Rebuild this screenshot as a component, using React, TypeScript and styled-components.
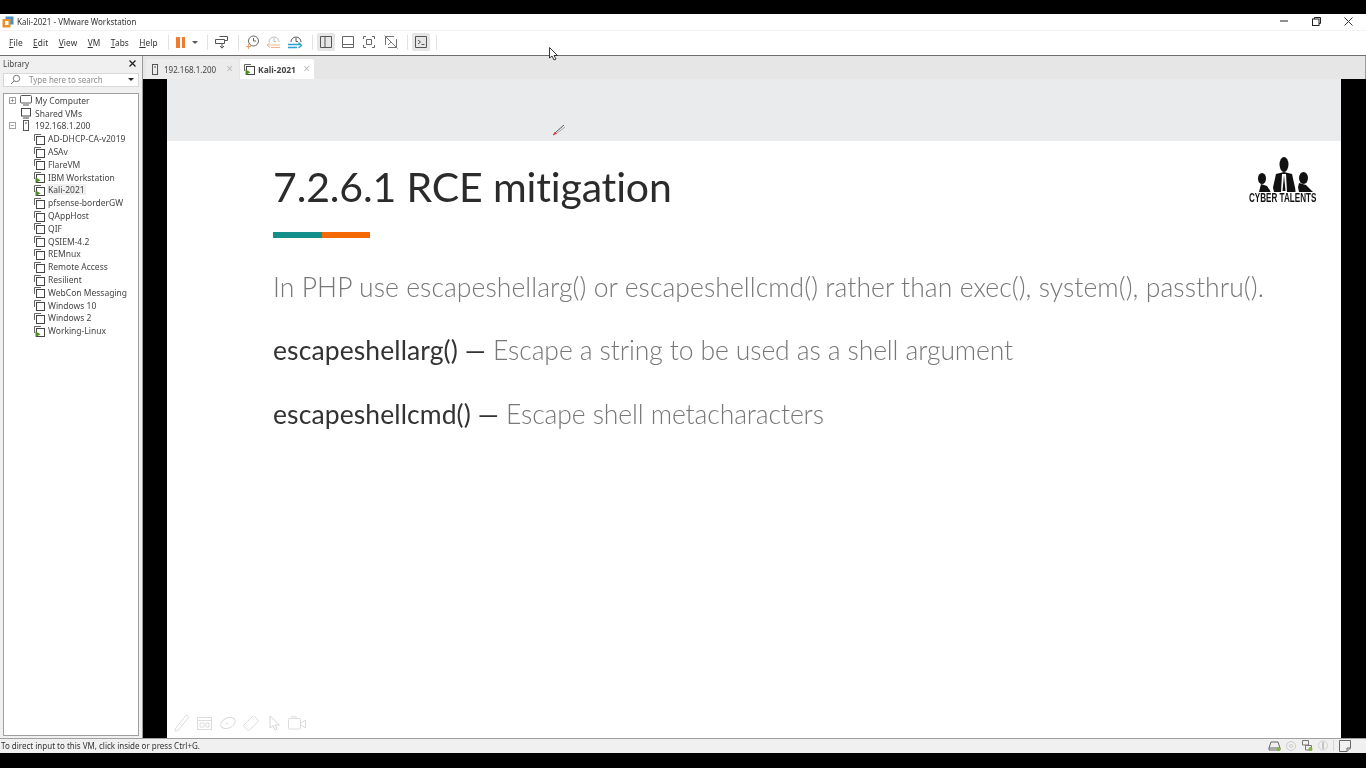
import styled, { createGlobalStyle } from 'styled-components';

const GlobalStyle = createGlobalStyle`
	html, body {
		margin: 0;
		padding: 0;
		background: #000;
		overflow: hidden;
	}
	* {
		box-sizing: border-box;
	}
`;

const uiFont = `"Noto Sans", "Open Sans", "Liberation Sans", sans-serif`;
const slideFont = `Lato, "Noto Sans", sans-serif`;

type TreeItem = { name: string; running?: boolean; selected?: boolean };

const vms: TreeItem[] = [
	{ name: 'AD-DHCP-CA-v2019' },
	{ name: 'ASAv' },
	{ name: 'FlareVM' },
	{ name: 'IBM Workstation', running: true },
	{ name: 'Kali-2021', running: true, selected: true },
	{ name: 'pfsense-borderGW' },
	{ name: 'QAppHost' },
	{ name: 'QIF' },
	{ name: 'QSIEM-4.2' },
	{ name: 'REMnux' },
	{ name: 'Remote Access' },
	{ name: 'Resilient' },
	{ name: 'WebCon Messaging' },
	{ name: 'Windows 10' },
	{ name: 'Windows 2' },
	{ name: 'Working-Linux', running: true },
];

const menus = ['File', 'Edit', 'View', 'VM', 'Tabs', 'Help'];

const VmIcon = ({ running }: { running?: boolean }) => (
	<svg width='11' height='12' viewBox='0 0 11 12' fill='none'>
		<path d='M.5 8V1.5H7' stroke='#666' strokeWidth='1' />
		<rect x='2.5' y='3.5' width='8' height='8' fill='#fff' stroke='#444' strokeWidth='1' />
		{running && <path d='M1.5 6.5L6.5 9.2L1.5 12Z' fill='#4d8a1f' />}
	</svg>
);

const HostIcon = () => (
	<svg width='12' height='11' viewBox='0 0 12 11' fill='none'>
		<rect x='3.5' y='0.5' width='5' height='10' stroke='#555' />
		<path d='M5 3H7' stroke='#555' />
	</svg>
);

const Glyph = ({ d, color = '#666' }: { d: string; color?: string }) => (
	<svg width='16' height='16' viewBox='0 0 16 16' fill='none' stroke={color} strokeWidth='1'>
		<path d={d} />
	</svg>
);

const App = () => {
	return (
		<>
			<GlobalStyle />
			<Screen>
				<Win>
					<TitleBar>
						<TitleLeft>
							<svg width='12' height='12' viewBox='0 0 12 12'>
								<rect x='3.5' y='0.5' width='8' height='8' fill='#4a90c8' />
								<rect x='0.5' y='3' width='8' height='8.5' fill='#e8912a' />
								<rect x='3' y='5' width='3.5' height='4' fill='#fff' />
							</svg>
							<span>Kali-2021 - VMware Workstation</span>
						</TitleLeft>
						<WinControls>
							<svg width='8' height='2' viewBox='0 0 8 2'>
								<path d='M0 1H8' stroke='#222' />
							</svg>
							<svg width='9' height='9' viewBox='0 0 9 9' fill='none'>
								<path d='M2.5 2V.5H8.5V6.5H7' stroke='#222' />
								<rect x='.5' y='2' width='6.5' height='6.5' stroke='#222' />
							</svg>
							<svg width='9' height='9' viewBox='0 0 9 9' fill='none'>
								<path d='M.5 .5L8.5 8.5M8.5 .5L.5 8.5' stroke='#333' />
							</svg>
						</WinControls>
					</TitleBar>

					<Toolbar>
						<MenuBar>
							{menus.map(m => (
								<MenuItem key={m}>
									<u>{m[0]}</u>
									{m.slice(1)}
								</MenuItem>
							))}
						</MenuBar>
						<Sep />
						<PauseIcon>
							<i />
							<i />
						</PauseIcon>
						<Caret />
						<Sep $gap={5} />
						<ToolBtn>
							<Glyph d='M5.5 2.5H13.5V6.5H10.5M1.5 5.5H10.5V9.5H1.5ZM8 10V14M6 12L8 14.2L10 12' color='#555' />
						</ToolBtn>
						<Sep $gap={3.5} />
						<ToolBtn>
							<svg width='16' height='16' viewBox='0 0 16 16' fill='none'>
								<circle cx='9.5' cy='7' r='5' stroke='#666' />
								<path d='M9.5 4V7H12' stroke='#666' />
								<path d='M2 12.5H7M4.5 10V15' stroke='#f2a06a' />
							</svg>
						</ToolBtn>
						<ToolBtn>
							<svg width='16' height='16' viewBox='0 0 16 16' fill='none'>
								<path d='M4 8A5 5 0 0 1 14 8' stroke='#bbb' />
								<path d='M9 4V7.5H11' stroke='#bbb' />
								<path d='M2 11H15M5 8.5L2 11L5 13.5M6 13.5H15' stroke='#f2b48a' />
							</svg>
						</ToolBtn>
						<ToolBtn>
							<svg width='16' height='16' viewBox='0 0 16 16' fill='none'>
								<path d='M4 8A5 5 0 0 1 14 8' stroke='#555' />
								<path d='M9 4V7.5H11' stroke='#555' />
								<path d='M1 10.5H13M11.5 8.5L14.5 11.5L11.5 14M1 13.5H10' stroke='#2a9fd0' strokeWidth='1.3' />
							</svg>
						</ToolBtn>
						<Sep $gap={4.5} />
						<ToolBtn $active>
							<Glyph d='M2.5 2.5H13.5V13.5H2.5ZM7 2.5V13.5' color='#555' />
						</ToolBtn>
						<ToolBtn>
							<Glyph d='M2.5 2.5H13.5V13.5H2.5ZM2.5 10.5H13.5' color='#666' />
						</ToolBtn>
						<ToolBtn>
							<Glyph d='M2.5 5V2.5H5M11 2.5H13.5V5M13.5 11V13.5H11M5 13.5H2.5V11M5.5 5.5H10.5V10.5H5.5Z' color='#666' />
						</ToolBtn>
						<ToolBtn>
							<Glyph d='M2.5 2.5H11M13.5 5V13.5H5M2.5 11V2.5M1.5 1.5L14.5 14.5M8 8L5 11' color='#777' />
						</ToolBtn>
						<Sep $gap={4} />
						<ToolBtn $active>
							<Glyph d='M2.5 2.5H13.5V13.5H2.5ZM5 6L7.5 8L5 10M8.5 10.5H11.5' color='#555' />
						</ToolBtn>
						<Sep $gap={2} />
					</Toolbar>

					<Body>
						<Sidebar>
							<LibraryHead>
								<span>Library</span>
								<svg width='7' height='7' viewBox='0 0 7 7'>
									<path d='M.5 .5L6.5 6.5M6.5 .5L.5 6.5' stroke='#222' strokeWidth='1.3' />
								</svg>
							</LibraryHead>
							<SearchBox>
								<svg width='11' height='11' viewBox='0 0 11 11' fill='none'>
									<circle cx='6.5' cy='4.5' r='3.2' stroke='#777' />
									<path d='M4 7L1 10' stroke='#777' />
								</svg>
								<span>Type here to search</span>
								<SearchCaret />
							</SearchBox>
							<Tree>
								<TreeRow>
									<Expander>+</Expander>
									<svg width='12' height='11' viewBox='0 0 12 11' fill='none'>
										<rect x='.5' y='.5' width='11' height='7.5' rx='1' stroke='#555' />
										<path d='M3 10H9' stroke='#555' />
									</svg>
									<span>My Computer</span>
								</TreeRow>
								<TreeRow $indent={1}>
									<svg width='12' height='12' viewBox='0 0 12 12' fill='none'>
										<rect x='1.5' y='1.5' width='9' height='7.5' stroke='#444' />
										<path d='M3 11H9' stroke='#444' />
									</svg>
									<span>Shared VMs</span>
								</TreeRow>
								<TreeRow>
									<Expander>−</Expander>
									<HostIcon />
									<span>192.168.1.200</span>
								</TreeRow>
								{vms.map(vm => (
									<TreeRow key={vm.name} $indent={2}>
										<VmIcon running={vm.running} />
										<TreeLabel $selected={vm.selected}>{vm.name}</TreeLabel>
									</TreeRow>
								))}
							</Tree>
						</Sidebar>

						<Main>
							<TabStrip>
								<Tab>
									<HostIcon />
									<TabName>192.168.1.200</TabName>
									<TabClose>×</TabClose>
								</Tab>
								<Tab $active>
									<VmIcon running />
									<TabName $active>Kali-2021</TabName>
									<TabClose>×</TabClose>
								</Tab>
							</TabStrip>
							<VmView>
								<Slide>
									<SlideBand />
									<SlideBody>
										<SlideHead>
											<div>
												<SlideTitle>7.2.6.1 RCE mitigation</SlideTitle>
												<AccentBar>
													<i />
													<i />
												</AccentBar>
											</div>
											<Logo>
												<svg width='55' height='35' viewBox='0 0 55 35' fill='#111'>
													<ellipse cx='26' cy='7.5' rx='4.5' ry='7.5' />
													<path d='M26 15L34 17L38 35H14L18 17Z' />
													<path d='M24 17L28 17L29 35H23Z' fill='#fff' />
													<path d='M26 18L27.5 34H24.5Z' />
													<ellipse cx='4' cy='21.5' rx='4' ry='5.5' />
													<path d='M3 27L9 29L13 35H1Z' />
													<ellipse cx='45.5' cy='21' rx='4.5' ry='6' />
													<path d='M41 26L48 28L55 35H39Z' />
													<path d='M13.5 24L16 35H12.5ZM38.5 23L41 35H37.5Z' fill='#fff' />
												</svg>
												<LogoText>
													<span>CYBER TALENTS</span>
												</LogoText>
											</Logo>
										</SlideHead>
										<SlideText $spacing={0.07}>
											In PHP use escapeshellarg() or escapeshellcmd() rather than exec(), system(), passthru().
										</SlideText>
										<SlideText $spacing={-0.1}>
											<b>escapeshellarg() —</b> Escape a string to be used as a shell argument
										</SlideText>
										<SlideText $spacing={-0.1}>
											<b>escapeshellcmd() —</b> Escape shell metacharacters
										</SlideText>
										<InkTools>
											<svg width='16' height='18' viewBox='0 0 16 18' fill='none' stroke='#dcdcdc'>
												<path d='M1 15L12 1.5C13 .8 15 2 14.5 3.5L3.5 17L1 17Z' />
											</svg>
											<svg width='16' height='13' viewBox='0 0 16 13' fill='none' stroke='#dcdcdc'>
												<rect x='.5' y='.5' width='14' height='12' />
												<path d='M.5 3.5H14.5M3 6H7V10H3ZM9 6H12V10H9Z' />
											</svg>
											<svg width='16' height='14' viewBox='0 0 16 14' fill='none' stroke='#dcdcdc'>
												<ellipse cx='8' cy='7' rx='7.5' ry='5' transform='rotate(-25 8 7)' />
												<path d='M5.5 8.5L8 7' />
											</svg>
											<svg width='16' height='16' viewBox='0 0 16 16' fill='none' stroke='#dcdcdc'>
												<path d='M1 10L9.5 1.5C10 1 11 1 11.5 1.5L15 5C15.5 5.5 15.5 6 15 6.5L6.5 15C6 15.5 5 15.5 4.5 15L1 11.5C.6 11 .6 10.5 1 10Z' />
											</svg>
											<svg width='12' height='16' viewBox='0 0 12 16' fill='none' stroke='#d4d4d4'>
												<path d='M1 .8V13L4 10.5L6 15L8 14L6 10H10.5Z' />
											</svg>
											<svg width='18' height='14' viewBox='0 0 18 14' fill='none' stroke='#dcdcdc'>
												<rect x='.5' y='2.5' width='12' height='10.5' rx='1' />
												<path d='M3 .8H9M13 7L17.5 4V12L13 9' />
											</svg>
										</InkTools>
									</SlideBody>
								</Slide>
							</VmView>
						</Main>
					</Body>

					<StatusBar>
						<span>To direct input to this VM, click inside or press Ctrl+G.</span>
						<StatusIcons>
							<svg width='13' height='10' viewBox='0 0 13 10' fill='none'>
								<path d='M1 7L3 1H10L12 7V9H1ZM1 7H12' stroke='#666' />
								<circle cx='10.5' cy='8' r='2' fill='#7ab83a' />
							</svg>
							<svg width='10' height='10' viewBox='0 0 10 10' fill='none'>
								<circle cx='5' cy='5' r='4.5' stroke='#ccc' />
								<circle cx='5' cy='5' r='1.5' stroke='#ccc' />
							</svg>
							<svg width='12' height='11' viewBox='0 0 12 11' fill='none'>
								<path d='M1.5 .5H7.5V5H1.5ZM4.5 5.5H10.5V10H4.5Z' stroke='#777' />
								<circle cx='9.5' cy='9' r='2' fill='#7ab83a' />
							</svg>
							<svg width='10' height='11' viewBox='0 0 10 11' fill='none'>
								<circle cx='5' cy='5.5' r='4.5' stroke='#d0d0d0' />
								<path d='M5 2V9' stroke='#c4c4c4' strokeWidth='2' />
							</svg>
							<StatusSep />
							<svg width='12' height='12' viewBox='0 0 12 12' fill='none'>
								<path d='M.5 .5H11.5V8L8 11.5H.5ZM8 11.5V8H11.5' stroke='#666' />
							</svg>
						</StatusIcons>
					</StatusBar>
				</Win>

				<MouseCursor viewBox='0 0 10 14'>
					<path d='M.5 .5V11L3 9L5 13L7 12L5 8.5H8.5Z' fill='#fff' stroke='#222' strokeWidth='.9' />
				</MouseCursor>
				<PenCursor viewBox='0 0 14 12'>
					<path d='M1 11L4 8L12 1' stroke='#555' strokeWidth='1' fill='none' />
					<path d='M4 10L13 3' stroke='#aaa' strokeWidth='1' fill='none' />
					<path d='M1 11.5L2.5 8L5 9.5Z' fill='#e8303a' />
				</PenCursor>
			</Screen>
		</>
	);
};

export default App;

const Screen = styled.div`
	position: relative;
	width: 1366px;
	height: 768px;
	padding: 14px 0 15px;
	background: #000;
	overflow: hidden;
	font-family: ${uiFont};
`;

const Win = styled.div`
	width: 100%;
	height: 100%;
	display: flex;
	flex-direction: column;
	background: #fff;
	filter: blur(0.3px);
`;

const TitleBar = styled.div`
	height: 16px;
	flex: none;
	display: flex;
	align-items: center;
	justify-content: space-between;
	padding: 0 0 1px 2px;
	font-size: 8px;
	color: #333;
`;

const TitleLeft = styled.div`
	display: flex;
	align-items: center;
	gap: 3px;
`;

const WinControls = styled.div`
	display: flex;
	align-items: center;
	gap: 23.5px;
	padding: 0 13px 1px 0;
`;

const Toolbar = styled.div`
	height: 26px;
	flex: none;
	display: flex;
	align-items: center;
	padding: 0 0 2px 4px;
	border-top: 1px solid #f2f2f2;
	border-bottom: 1px solid #6e6e6e;
`;

const MenuBar = styled.div`
	display: flex;
	gap: 10.4px;
	padding: 0 4px 0 5px;
	width: 158px;
`;

const MenuItem = styled.span`
	font-size: 8.3px;
	color: #333;
	letter-spacing: 0.1px;

	u {
		text-underline-offset: 1px;
	}
`;

const Sep = styled.div<{ $gap?: number }>`
	width: 1px;
	height: 15px;
	background: #e2e2e2;
	margin: 0 ${({ $gap }) => $gap ?? 6}px;
`;

const PauseIcon = styled.div`
	display: flex;
	gap: 2px;
	margin-left: 1px;

	i {
		display: block;
		width: 3.5px;
		height: 11px;
		background: #ee7b30;
	}
`;

const Caret = styled.div`
	width: 0;
	height: 0;
	margin: 0 4px 0 7px;
	border-left: 3px solid transparent;
	border-right: 3px solid transparent;
	border-top: 3px solid #555;
`;

const ToolBtn = styled.div<{ $active?: boolean }>`
	width: 18px;
	height: 18px;
	margin-right: 3.5px;
	display: flex;
	align-items: center;
	justify-content: center;
	border-radius: 2px;
	background: ${({ $active }) => ($active ? '#e6e6e6' : 'transparent')};
`;

const Body = styled.div`
	flex: 1;
	min-height: 0;
	display: flex;
`;

const Sidebar = styled.div`
	width: 143px;
	flex: none;
	display: flex;
	flex-direction: column;
	padding: 0 3px 2px;
	background: #f0f0f0;
	border-right: 1px solid #9a9a9a;
`;

const LibraryHead = styled.div`
	height: 17px;
	flex: none;
	display: flex;
	align-items: center;
	justify-content: space-between;
	padding: 0 3px 2px 0;
	font-size: 8px;
	color: #444;
`;

const SearchBox = styled.div`
	height: 14px;
	flex: none;
	display: flex;
	align-items: center;
	gap: 8px;
	padding: 0 4px 1px;
	background: #fff;
	border: 1px solid #d8d8d8;
	font-size: 8px;
	color: #8a8a8a;

	svg {
		margin-left: 2px;
	}
`;

const SearchCaret = styled.div`
	width: 0;
	height: 0;
	margin-left: auto;
	border-left: 3px solid transparent;
	border-right: 3px solid transparent;
	border-top: 3px solid #222;
`;

const Tree = styled.div`
	flex: 1;
	margin-top: 6px;
	background: #fff;
	border: 1px solid #9f9f9f;
`;

const TreeRow = styled.div<{ $indent?: number }>`
	height: 12.8px;
	display: flex;
	align-items: center;
	gap: ${({ $indent }) => ($indent === 2 ? 2 : 3)}px;
	padding-left: ${({ $indent }) => ($indent === 2 ? 30 : $indent === 1 ? 16 : 5)}px;
	font-size: 8.5px;
	color: #444;
	white-space: nowrap;
`;

const TreeLabel = styled.span<{ $selected?: boolean }>`
	padding: 0 1px;
	background: ${({ $selected }) => ($selected ? '#f0f0f0' : 'transparent')};
`;

const Expander = styled.span`
	width: 7px;
	height: 7px;
	margin-right: 1px;
	display: flex;
	align-items: center;
	justify-content: center;
	border: 1px solid #a0a0a0;
	font-size: 7px;
	line-height: 1;
	color: #555;
`;

const Main = styled.div`
	flex: 1;
	min-width: 0;
	display: flex;
	flex-direction: column;
`;

const TabStrip = styled.div`
	height: 23px;
	flex: none;
	display: flex;
	align-items: flex-end;
	gap: 1px;
	padding-left: 3px;
	background: #e6e6e6;
	border-right: 1px solid #999;
`;

const Tab = styled.div<{ $active?: boolean }>`
	width: ${({ $active }) => ($active ? '74px' : '93px')};
	height: 20px;
	display: flex;
	align-items: center;
	gap: 3px;
	padding: 0 ${({ $active }) => ($active ? 4 : 6)}px 0 ${({ $active }) => ($active ? 4 : 3)}px;
	background: ${({ $active }) => ($active ? '#fff' : '#ececec')};
	border-radius: 2px 2px 0 0;
`;

const TabName = styled.span<{ $active?: boolean }>`
	flex: 1;
	font-size: ${({ $active }) => ($active ? 8.5 : 8)}px;
	font-weight: ${({ $active }) => ($active ? 700 : 400)};
	color: #444;
	white-space: nowrap;
`;

const TabClose = styled.span`
	font-size: 12px;
	line-height: 1;
	color: #bbb;
`;

const VmView = styled.div`
	flex: 1;
	min-height: 0;
	display: flex;
	padding: 0 25px 0 24px;
	background: #000;
`;

const Slide = styled.div`
	flex: 1;
	min-width: 0;
	display: flex;
	flex-direction: column;
	background: #fff;
`;

const SlideBand = styled.div`
	height: 62px;
	flex: none;
	background: #e9ebec;
`;

const SlideBody = styled.div`
	flex: 1;
	display: flex;
	flex-direction: column;
	padding-left: 106px;
	font-family: ${slideFont};
`;

const SlideHead = styled.div`
	display: flex;
	justify-content: space-between;
	align-items: flex-start;
	padding-right: 24px;
	height: 131.5px;
`;

const SlideTitle = styled.h1`
	margin: 20px 0 0;
	font-family: ${slideFont};
	font-size: 41px;
	line-height: 52px;
	font-weight: 400;
	letter-spacing: -0.14px;
	color: #2b2b2b;
	white-space: nowrap;
`;

const AccentBar = styled.div`
	display: flex;
	margin-top: 19px;

	i {
		display: block;
		width: 48.5px;
		height: 6px;
		background: #14908a;
	}

	i + i {
		background: #f56a00;
	}
`;

const Logo = styled.div`
	width: 68px;
	display: flex;
	flex-direction: column;
	margin-top: 16px;

	svg {
		display: block;
		margin-left: 9px;
	}
`;

const LogoText = styled.div`
	height: 12px;
	font-family: "Liberation Sans", sans-serif;
	font-size: 13.5px;
	font-weight: 700;
	line-height: 12px;
	color: #111;
	white-space: nowrap;

	span {
		display: inline-block;
		transform: scaleX(0.6);
		transform-origin: left center;
	}
`;

const SlideText = styled.p<{ $spacing: number }>`
	margin: 0 0 34.5px;
	font-size: 26.5px;
	line-height: 29px;
	font-weight: 300;
	letter-spacing: ${({ $spacing }) => $spacing}px;
	color: #777;
	white-space: nowrap;

	b {
		font-weight: 400;
		letter-spacing: 0.1px;
		color: #333;
	}
`;

const InkTools = styled.div`
	display: flex;
	align-items: center;
	gap: 7px;
	margin: auto 0 6px -99px;

	svg:nth-child(5) {
		margin-left: 3px;
	}
`;

const StatusBar = styled.div`
	height: 15px;
	flex: none;
	display: flex;
	align-items: center;
	justify-content: space-between;
	padding: 0 15px 1px 1px;
	background: #f0f0f0;
	border-top: 1px solid #a0a0a0;
	font-size: 8px;
	color: #333;
`;

const StatusIcons = styled.div`
	display: flex;
	align-items: center;
	gap: 5px;
`;

const StatusSep = styled.div`
	width: 1px;
	height: 11px;
	background: #d6d6d6;
`;

const MouseCursor = styled.svg`
	position: absolute;
	left: 549px;
	top: 47px;
	width: 10px;
	height: 14px;
`;

const PenCursor = styled.svg`
	position: absolute;
	left: 552px;
	top: 124px;
	width: 14px;
	height: 12px;
`;
